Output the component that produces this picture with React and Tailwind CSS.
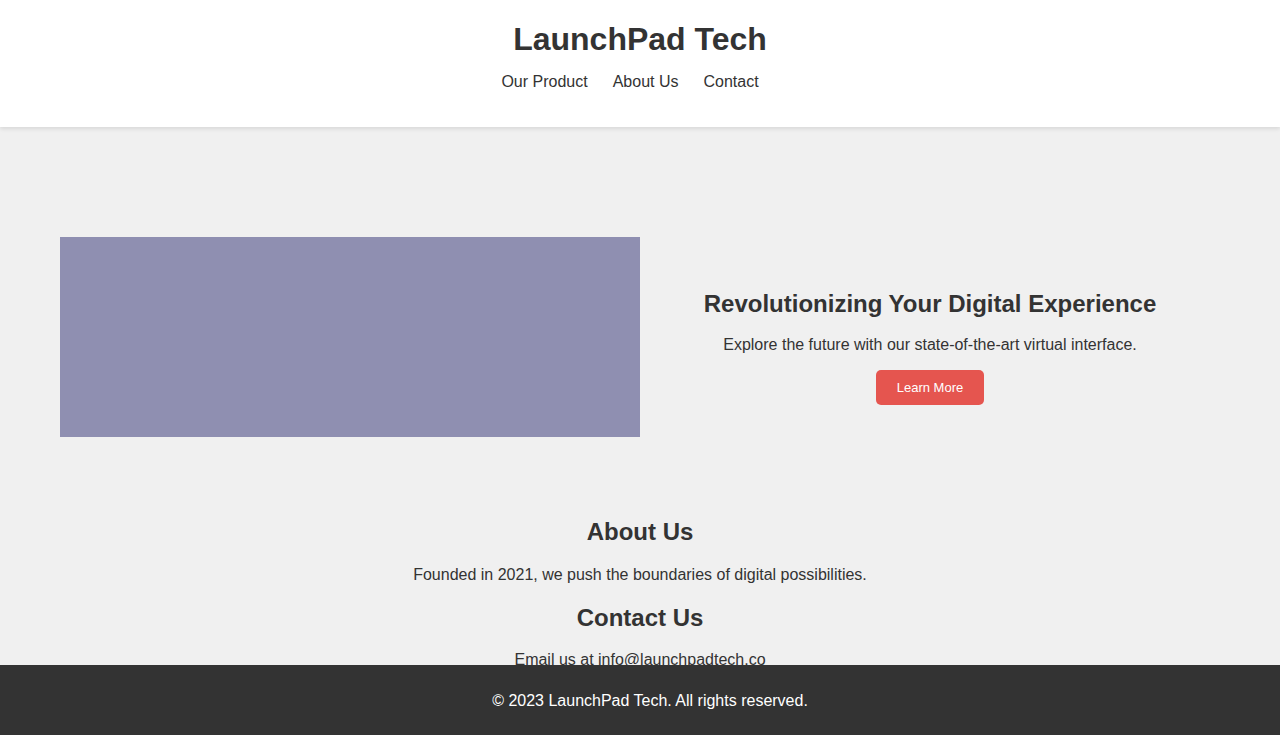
export default function App() {
  return (
    <div className="min-h-screen bg-[#f0f0f0] text-[#333] font-['Liberation_Sans',Arial,sans-serif]">
      {/* Header */}
      <header className="bg-white shadow-[0_2px_4px_rgba(0,0,0,0.1)] pt-[21px] pb-[36px] text-center relative z-10">
        <h1 className="text-[32px] font-bold leading-[37px]">LaunchPad Tech</h1>
        <nav className="mt-[15px] flex justify-center gap-[25px] pr-[20px] text-[16px] leading-[18px]">
          <a href="#product" className="text-[#333]">Our Product</a>
          <a href="#about" className="text-[#333]">About Us</a>
          <a href="#contact" className="text-[#333]">Contact</a>
        </nav>
      </header>

      {/* Hero */}
      <section id="product" className="px-[60px] pt-[110px] flex">
        <div className="w-[580px] h-[200px] bg-[#8f8fb1] shrink-0" />
        <div className="flex-1 flex flex-col items-center text-center pt-[53px]">
          <h2 className="text-[24px] font-bold leading-[28px]">Revolutionizing Your Digital Experience</h2>
          <p className="mt-[18px] text-[16px] leading-[18px]">
            Explore the future with our state-of-the-art virtual interface.
          </p>
          <button className="mt-[16px] bg-[#e5554f] text-white text-[13px] leading-[15px] px-[21px] py-[10px] rounded-[5px]">
            Learn More
          </button>
        </div>
      </section>

      {/* About */}
      <section id="about" className="text-center mt-[81px]">
        <h2 className="text-[24px] font-bold leading-[28px]">About Us</h2>
        <p className="mt-[20px] text-[16px] leading-[18px]">
          Founded in 2021, we push the boundaries of digital possibilities.
        </p>
      </section>

      {/* Contact */}
      <section id="contact" className="text-center mt-[20px] pb-[90px]">
        <h2 className="text-[24px] font-bold leading-[28px]">Contact Us</h2>
        <p className="mt-[19px] text-[16px] leading-[18px]">Email us at info@launchpadtech.co</p>
      </section>

      {/* Footer */}
      <footer className="fixed bottom-0 left-0 right-0 h-[70px] pt-[2px] pl-[20px] bg-[#333] text-white flex items-center justify-center text-[16px]">
        © 2023 LaunchPad Tech. All rights reserved.
      </footer>
    </div>
  );
}
